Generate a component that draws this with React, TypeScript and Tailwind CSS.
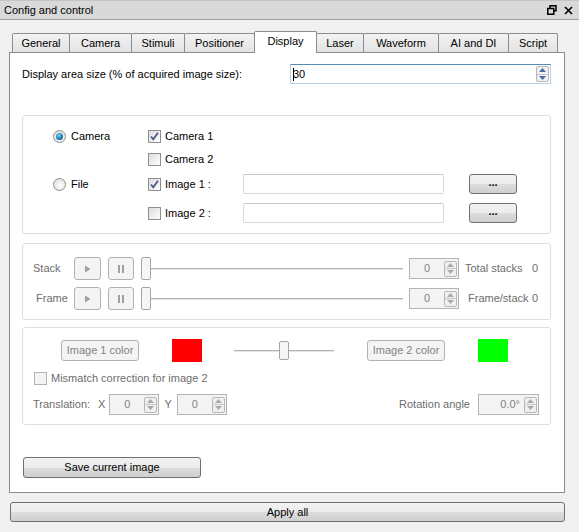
import React from "react";

const btnEnabled =
  "border border-[#707070] rounded-[3px] bg-[linear-gradient(to_bottom,#f2f2f2_0%,#ebebeb_50%,#dddddd_51%,#cfcfcf_100%)] text-black flex items-center justify-center";
const btnDisabled =
  "border border-[#adb2b5] rounded-[3px] bg-[#f4f4f4] text-[#838383] flex items-center justify-center";

function Checkbox({ checked, disabled }: { checked?: boolean; disabled?: boolean }) {
  return (
    <div
      className={
        "w-[13px] h-[13px] shrink-0 border flex items-center justify-center " +
        (disabled ? "border-[#b1b1b1] bg-[#f4f4f4]" : "border-[#8e8f8f] bg-[linear-gradient(135deg,#dcdcdc,#ffffff)]")
      }
    >
      {checked && (
        <svg width="11" height="11" viewBox="0 0 11 11">
          <path d="M2 5.5 L4.3 8.3 L9 1.8" fill="none" stroke="#4a5a8c" strokeWidth="1.8" />
        </svg>
      )}
    </div>
  );
}

function Radio({ checked }: { checked?: boolean }) {
  return (
    <div className="w-[13px] h-[13px] shrink-0 rounded-full border border-[#8e8f8f] bg-[radial-gradient(circle_at_60%_60%,#ffffff,#d6d6d6)] flex items-center justify-center">
      {checked && (
        <div className="w-[7px] h-[7px] rounded-full bg-[radial-gradient(circle_at_40%_35%,#7fd4f5,#1b7fb5_55%,#0b3d66)]" />
      )}
    </div>
  );
}

function SpinArrows({ active }: { active?: boolean }) {
  const c = active ? "#4d6aa8" : "#a8a8a8";
  return (
    <div className="flex flex-col w-[13px] h-[16px] border border-[#b8b8b8] rounded-[2px] bg-[#f0f0f0]">
      <div className="flex-1 flex items-center justify-center border-b border-[#c8c8c8]">
        <svg width="7" height="4" viewBox="0 0 7 4">
          <path d="M0 4 L3.5 0 L7 4 Z" fill={c} />
        </svg>
      </div>
      <div className="flex-1 flex items-center justify-center">
        <svg width="7" height="4" viewBox="0 0 7 4">
          <path d="M0 0 L3.5 4 L7 0 Z" fill={c} />
        </svg>
      </div>
    </div>
  );
}

function SpinBox({ value, width, align = "center" }: { value: string; width: string; align?: "center" | "right" }) {
  return (
    <div className={width + " h-[21px] shrink-0 border border-[#b4b4b4] bg-[#f4f4f4] flex items-center pr-[1px]"}>
      <div className={"flex-1 text-[#838383] " + (align === "center" ? "text-center" : "text-right pr-[4px]")}>{value}</div>
      <SpinArrows />
    </div>
  );
}

function Slider({ width, handleLeft, height }: { width: string; handleLeft: string; height: string }) {
  return (
    <div className={width + " " + height + " relative shrink-0 flex items-center"}>
      <div className="w-full h-[2px] border-t border-[#b0b0b0] bg-[#e6e6e6]" />
      <div
        className={
          "absolute top-0 " + handleLeft + " w-[10px] " + height + " rounded-[2px] border border-[#a5a5a5] bg-[#f6f6f6]"
        }
      />
    </div>
  );
}

const tabs = [
  { name: "General", w: "w-[58px]" },
  { name: "Camera", w: "w-[63px]" },
  { name: "Stimuli", w: "w-[54px]" },
  { name: "Positioner", w: "w-[71px]" },
  { name: "Display", w: "w-[63px]", active: true },
  { name: "Laser", w: "w-[48px]" },
  { name: "Waveform", w: "w-[76px]" },
  { name: "AI and DI", w: "w-[71px]" },
  { name: "Script", w: "w-[50px]" },
];

function PlayPauseRow({ label, labelPad, right, rightPad }: { label: string; labelPad: string; right: string; rightPad: string }) {
  return (
    <div className="flex items-center h-[23px]">
      <div className={"w-[51px] shrink-0 text-[#6d6d6d] " + labelPad}>{label}</div>
      <div className={btnDisabled + " w-[27px] h-[23px] shrink-0"}>
        <svg width="7" height="8" viewBox="0 0 7 8">
          <path d="M1 0.5 L6.5 4 L1 7.5 Z" fill="#a0a0a0" />
        </svg>
      </div>
      <div className={btnDisabled + " w-[26px] h-[23px] shrink-0 ml-[7px] gap-[2px]"}>
        <div className="w-[2px] h-[8px] bg-[#a0a0a0]" />
        <div className="w-[2px] h-[8px] bg-[#a0a0a0]" />
      </div>
      <div className="ml-[7px]">
        <Slider width="w-[262px]" height="h-[23px]" handleLeft="left-0" />
      </div>
      <div className="ml-[6px]">
        <SpinBox value="0" width="w-[50px]" />
      </div>
      <div className={"w-[73px] shrink-0 whitespace-nowrap text-[#6d6d6d] " + rightPad}>{right}</div>
      <div className="shrink-0 text-[#6d6d6d]">0</div>
    </div>
  );
}

export default function App() {
  return (
    <div className="w-[579px] h-[532px] bg-[#f0f0f0] overflow-hidden font-['Liberation_Sans',Arial,sans-serif] text-[11px] text-black leading-none">
      {/* title bar */}
      <div className="h-[20px] bg-[#d9d9d9] border-t border-[#c4c4c4] border-b border-b-[#a0a0a0] flex items-center pl-[4px] pr-[6px]">
        <div className="flex-1">Config and control</div>
        <svg width="10" height="10" viewBox="0 0 10 10" className="mr-[7px]">
          <rect x="3" y="0.75" width="6" height="5" fill="none" stroke="#000" strokeWidth="1.5" />
          <rect x="0.75" y="3.5" width="6" height="5.75" fill="#d9d9d9" stroke="#000" strokeWidth="1.5" />
        </svg>
        <svg width="9" height="9" viewBox="0 0 9 9">
          <path d="M1 1 L8 8 M8 1 L1 8" stroke="#000" strokeWidth="1.6" />
        </svg>
      </div>

      {/* tabs */}
      <div className="flex items-end h-[21px] mt-[11px] ml-[12px]">
        {tabs.map((t, i) =>
          t.active ? (
            <div
              key={t.name}
              className={
                t.w +
                " h-[22px] -mb-px -ml-px relative z-10 bg-white border border-b-0 border-[#898c95] rounded-t-[2px] flex items-center justify-center pb-[2px]"
              }
            >
              {t.name}
            </div>
          ) : (
            <div
              key={t.name}
              className={
                t.w +
                (i > 0 ? " -ml-px" : "") +
                " h-[19px] border border-b-0 border-[#898c95] rounded-t-[2px] bg-[linear-gradient(to_bottom,#f3f3f3,#e3e3e3)] flex items-center justify-center"
              }
            >
              {t.name}
            </div>
          )
        )}
      </div>

      {/* tab pane */}
      <div className="ml-[9px] w-[556px] h-[441px] bg-white border border-[#898c95] pl-[12px] pt-[11px]">
        <div className="w-[529px]">
          {/* display area row */}
          <div className="flex items-center justify-between h-[20px]">
            <div>Display area size (% of acquired image size):</div>
            <div className="w-[261px] h-[20px] border border-[#b7d3ea] border-t-[#5a8ab4] flex items-center pr-[1px]">
              <div className="flex-1 flex items-center pl-[2px]">
                <div className="w-px h-[13px] bg-black" />
                <span className="-ml-px">30</span>
              </div>
              <SpinArrows active />
            </div>
          </div>

          {/* source group */}
          <div className="mt-[31px] h-[119px] border border-[#d5dfe5] rounded-[3px] pl-[30px] pt-[10px]">
            <div className="flex items-center h-[20px]">
              <div className="w-[95px] flex items-center gap-[5px]">
                <Radio checked />
                <span>Camera</span>
              </div>
              <div className="flex items-center gap-[4px]">
                <Checkbox checked />
                <span>Camera 1</span>
              </div>
            </div>
            <div className="flex items-center h-[20px] mt-[3px]">
              <div className="w-[95px]" />
              <div className="flex items-center gap-[4px]">
                <Checkbox />
                <span>Camera 2</span>
              </div>
            </div>
            <div className="flex items-center h-[20px] mt-[5px]">
              <div className="w-[95px] flex items-center gap-[5px]">
                <Radio />
                <span>File</span>
              </div>
              <div className="w-[95px] flex items-center gap-[4px]">
                <Checkbox checked />
                <span>Image 1 :</span>
              </div>
              <div className="w-[201px] h-[20px] border border-[#d8d8d8] border-t-[#c8c8c8] rounded-[2px]" />
              <div className={btnEnabled + " ml-[25px] w-[48px] h-[20px] pb-[4px] font-bold"}>...</div>
            </div>
            <div className="flex items-center h-[20px] mt-[9px]">
              <div className="w-[95px]" />
              <div className="w-[95px] flex items-center gap-[4px]">
                <Checkbox />
                <span>Image 2 :</span>
              </div>
              <div className="w-[201px] h-[20px] border border-[#d8d8d8] border-t-[#c8c8c8] rounded-[2px]" />
              <div className={btnEnabled + " ml-[25px] w-[48px] h-[20px] pb-[4px] font-bold"}>...</div>
            </div>
          </div>

          {/* playback group */}
          <div className="mt-[9px] h-[77px] border border-[#d5dfe5] rounded-[3px] pt-[13px]">
            <PlayPauseRow label="Stack" labelPad="pl-[10px]" right="Total stacks" rightPad="pl-[6px]" />
            <div className="mt-[7px]">
              <PlayPauseRow label="Frame" labelPad="pl-[13px]" right="Frame/stack" rightPad="pl-[9px]" />
            </div>
          </div>

          {/* color group */}
          <div className="mt-[7px] h-[98px] border border-[#d5dfe5] rounded-[3px] pt-[11px] text-[#6d6d6d]">
            <div className="flex items-center h-[23px] pl-[38px]">
              <div className={btnDisabled + " w-[78px] h-[21px] text-[#6d6d6d]"}>Image 1 color</div>
              <div className="ml-[33px] w-[30px] h-[23px] bg-[#ff0000]" />
              <div className="ml-[32px]">
                <Slider width="w-[100px]" height="h-[19px]" handleLeft="left-[45px]" />
              </div>
              <div className={btnDisabled + " ml-[33px] w-[78px] h-[21px] text-[#6d6d6d]"}>Image 2 color</div>
              <div className="ml-[33px] w-[30px] h-[23px] bg-[#00ff00]" />
            </div>
            <div className="flex items-center h-[18px] mt-[7px] pl-[11px] gap-[4px]">
              <Checkbox disabled />
              <span>Mismatch correction for image 2</span>
            </div>
            <div className="flex items-center h-[21px] mt-[7px] pl-[10px] pr-[11px]">
              <span>Translation:</span>
              <span className="ml-[8px]">X</span>
              <div className="ml-[4px]">
                <SpinBox value="0" width="w-[50px]" />
              </div>
              <span className="ml-[5px]">Y</span>
              <div className="ml-[5px]">
                <SpinBox value="0" width="w-[50px]" />
              </div>
              <div className="flex-1" />
              <span>Rotation angle</span>
              <div className="ml-[8px]">
                <SpinBox value="0.0°" width="w-[61px]" align="right" />
              </div>
            </div>
          </div>

          <div className={btnEnabled + " mt-[32px] ml-px w-[178px] h-[21px]"}>Save current image</div>
        </div>
      </div>

      <div className={btnEnabled + " mt-[9px] ml-[10px] w-[555px] h-[20px]"}>Apply all</div>
    </div>
  );
}
